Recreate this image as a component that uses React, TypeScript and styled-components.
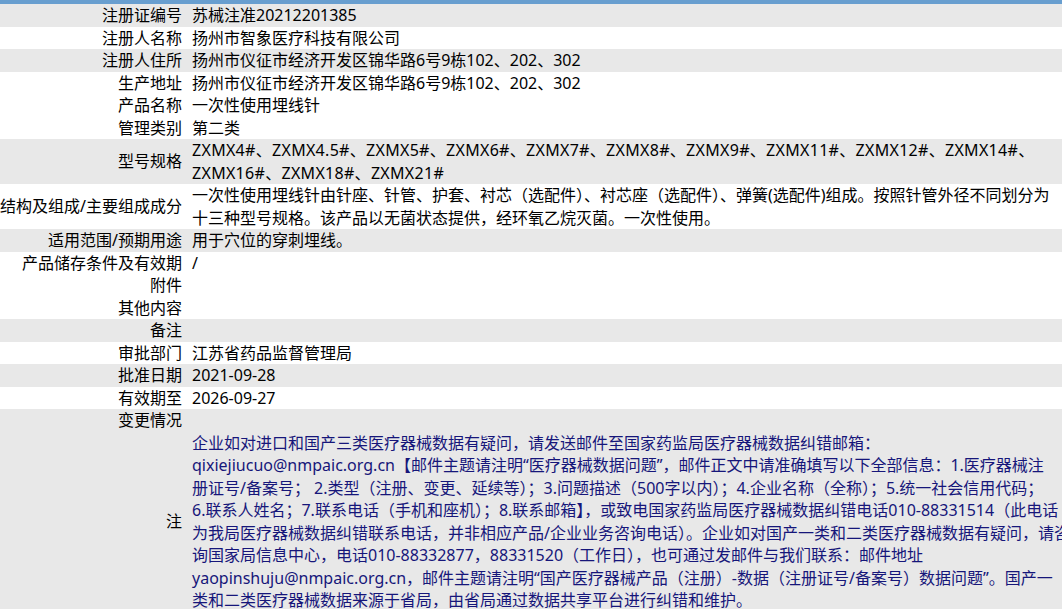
import React from "react";
import styled, { createGlobalStyle } from "styled-components";

const GlobalStyle = createGlobalStyle`
  html, body {
    margin: 0;
    padding: 0;
    overflow: hidden;
    background: #ffffff;
  }
  body {
    font-family: "Noto Sans", "Noto Sans CJK SC", sans-serif;
    font-size: 16px;
    color: #000;
  }
`;

const Page = styled.div`
  border-top: 4px solid #689ecf;
  display: flex;
  flex-direction: column;
`;

const Row = styled.div<{ $shade?: boolean }>`
  display: flex;
  align-items: stretch;
  background: ${(p) => (p.$shade ? "#e8e8e8" : "#ffffff")};
  line-height: 22.5px;
`;

const Label = styled.div`
  flex: 0 0 182px;
  padding-right: 1px;
  display: flex;
  align-items: center;
  justify-content: flex-end;
  text-align: right;
  white-space: nowrap;
`;

const Value = styled.div<{ $note?: boolean; $spread?: boolean }>`
  flex: 1 1 auto;
  padding-left: 9px;
  white-space: nowrap;
  letter-spacing: ${(p) => (p.$spread ? "0.3px" : "normal")};
  color: ${(p) => (p.$note ? "#16167a" : "#000")};
`;

type Item = { label: string; lines: string[]; shade?: boolean; note?: boolean; spread?: boolean };

const items: Item[] = [
  { label: "注册证编号", lines: ["苏械注准20212201385"], shade: true },
  { label: "注册人名称", lines: ["扬州市智象医疗科技有限公司"] },
  { label: "注册人住所", lines: ["扬州市仪征市经济开发区锦华路6号9栋102、202、302"], shade: true },
  { label: "生产地址", lines: ["扬州市仪征市经济开发区锦华路6号9栋102、202、302"] },
  { label: "产品名称", lines: ["一次性使用埋线针"] },
  { label: "管理类别", lines: ["第二类"] },
  {
    label: "型号规格",
    lines: [
      "ZXMX4#、ZXMX4.5#、ZXMX5#、ZXMX6#、ZXMX7#、ZXMX8#、ZXMX9#、ZXMX11#、ZXMX12#、ZXMX14#、",
      "ZXMX16#、ZXMX18#、ZXMX21#",
    ],
    shade: true,
    spread: true,
  },
  {
    label: "结构及组成/主要组成成分",
    lines: [
      "一次性使用埋线针由针座、针管、护套、衬芯（选配件）、衬芯座（选配件）、弹簧(选配件)组成。按照针管外径不同划分为",
      "十三种型号规格。该产品以无菌状态提供，经环氧乙烷灭菌。一次性使用。",
    ],
  },
  { label: "适用范围/预期用途", lines: ["用于穴位的穿刺埋线。"], shade: true },
  { label: "产品储存条件及有效期", lines: ["/"] },
  { label: "附件", lines: [""] },
  { label: "其他内容", lines: [""] },
  { label: "备注", lines: [""], shade: true },
  { label: "审批部门", lines: ["江苏省药品监督管理局"] },
  { label: "批准日期", lines: ["2021-09-28"], shade: true },
  { label: "有效期至", lines: ["2026-09-27"] },
  { label: "变更情况", lines: [""], shade: true },
  {
    label: "注",
    note: true,
    shade: true,
    lines: [
      "企业如对进口和国产三类医疗器械数据有疑问，请发送邮件至国家药监局医疗器械数据纠错邮箱：",
      "qixiejiucuo@nmpaic.org.cn【邮件主题请注明“医疗器械数据问题”，邮件正文中请准确填写以下全部信息：1.医疗器械注",
      "册证号/备案号； 2.类型（注册、变更、延续等）；3.问题描述（500字以内）；4.企业名称（全称）；5.统一社会信用代码；",
      "6.联系人姓名；7.联系电话（手机和座机）；8.联系邮箱】，或致电国家药监局医疗器械数据纠错电话010-88331514（此电话",
      "为我局医疗器械数据纠错联系电话，并非相应产品/企业业务咨询电话）。企业如对国产一类和二类医疗器械数据有疑问，请咨",
      "询国家局信息中心，电话010-88332877，88331520（工作日），也可通过发邮件与我们联系：邮件地址",
      "yaopinshuju@nmpaic.org.cn，邮件主题请注明“国产医疗器械产品（注册）-数据（注册证号/备案号）数据问题”。国产一",
      "类和二类医疗器械数据来源于省局，由省局通过数据共享平台进行纠错和维护。",
    ],
  },
];

export default function App() {
  return (
    <>
      <GlobalStyle />
      <Page>
        {items.map((it) => (
          <Row key={it.label} $shade={it.shade}>
            <Label>{it.label}</Label>
            <Value $note={it.note} $spread={it.spread}>
              {it.lines.map((l, i) => (
                <React.Fragment key={i}>
                  {i > 0 && <br />}
                  {l === "" ? "\u00a0" : l}
                </React.Fragment>
              ))}
            </Value>
          </Row>
        ))}
      </Page>
    </>
  );
}
